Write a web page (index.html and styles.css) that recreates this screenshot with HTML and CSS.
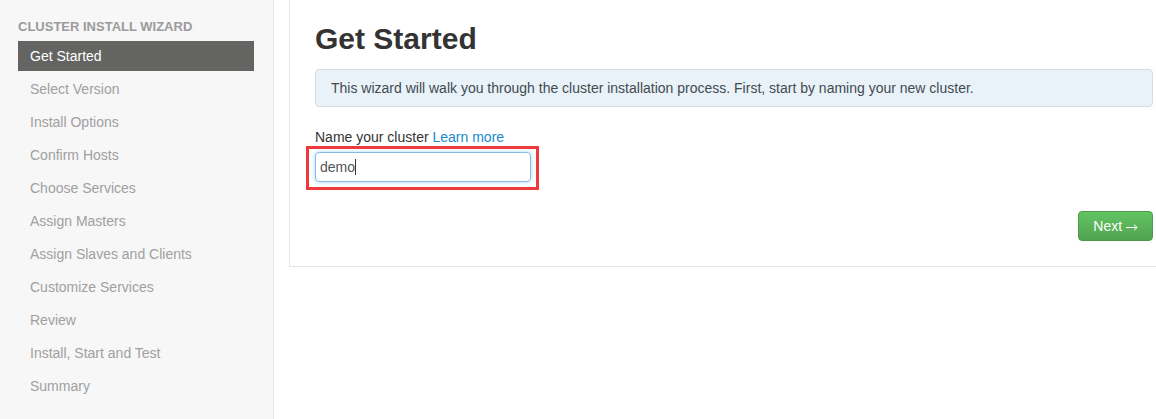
FILE: index.html
```html
<!DOCTYPE html>
<html>
<head>
<meta charset="utf-8">
<link rel="stylesheet" href="styles.css">
</head>
<body>
<div class="layout">
  <aside class="sidebar">
    <div class="nav-header">CLUSTER INSTALL WIZARD</div>
    <ul class="nav-list">
      <li class="nav-item active">Get Started</li>
      <li class="nav-item">Select Version</li>
      <li class="nav-item">Install Options</li>
      <li class="nav-item">Confirm Hosts</li>
      <li class="nav-item">Choose Services</li>
      <li class="nav-item">Assign Masters</li>
      <li class="nav-item">Assign Slaves and Clients</li>
      <li class="nav-item">Customize Services</li>
      <li class="nav-item">Review</li>
      <li class="nav-item">Install, Start and Test</li>
      <li class="nav-item">Summary</li>
    </ul>
  </aside>
  <main class="main">
    <section class="card">
      <h1 class="title">Get Started</h1>
      <div class="alert">This wizard will walk you through the cluster installation process. First, start by naming your new cluster.</div>
      <label class="field-label">Name your cluster <a class="link">Learn more</a></label>
      <div class="input-wrap">
        <div class="input"><span>demo</span><span class="caret"></span></div>
        <span class="highlight"></span>
      </div>
      <div class="actions">
        <button class="btn-next">Next <svg class="arrow" width="12" height="7" viewBox="0 0 12 7"><path d="M0 3.5H11M8 0.8L11.2 3.5L8 6.2" fill="none" stroke="#fff" stroke-width="1"/></svg></button>
      </div>
    </section>
  </main>
</div>
</body>
</html>
```
FILE: styles.css
```css
html, body {
  margin: 0;
  padding: 0;
  height: 100%;
  overflow: hidden;
  background: #fff;
  font-family: "Liberation Sans", Arial, sans-serif;
  font-size: 14px;
  color: #333;
}
.layout {
  display: flex;
  height: 419px;
}
.sidebar {
  width: 255px;
  flex: 0 0 255px;
  background: #f7f7f7;
  border-right: 1px solid #e6e6e6;
  padding: 17px 0 0 18px;
}
.nav-header {
  font-size: 13px;
  font-weight: bold;
  line-height: 20px;
  color: #9b9b9b;
  margin-bottom: 4px;
}
.nav-list {
  list-style: none;
  margin: 0;
  padding: 0;
  width: 236px;
}
.nav-item {
  line-height: 20px;
  padding: 5px 12px;
  margin-bottom: 3px;
  color: #a0a0a0;
}
.nav-item.active {
  background: #646562;
  color: #fff;
}
.main {
  flex: 1;
  padding-left: 15px;
  min-width: 0;
}
.card {
  width: 838px;
  border: 1px solid #e6e6e6;
  border-top: none;
  padding: 21px 25px 25px 25px;
}
.title {
  margin: 0;
  font-size: 30px;
  line-height: 36px;
  font-weight: bold;
  color: #333;
}
.alert {
  margin-top: 12px;
  background: #e8f2f8;
  border: 1px solid #d5dde2;
  border-radius: 4px;
  padding: 8px 15px;
  line-height: 20px;
  color: #434a51;
}
.field-label {
  display: block;
  margin-top: 20px;
  line-height: 20px;
  color: #333;
}
.link {
  color: #1a8acb;
}
.input-wrap {
  position: relative;
  margin-top: 5px;
  width: 216px;
  height: 30px;
}
.input {
  box-sizing: border-box;
  width: 216px;
  height: 30px;
  border: 1px solid #85b9e6;
  border-radius: 4px;
  box-shadow: 0 0 5px rgba(82, 168, 236, 0.45);
  padding: 0 4px;
  display: flex;
  align-items: center;
  color: #555;
  line-height: 20px;
}
.caret {
  display: inline-block;
  width: 1px;
  height: 16px;
  background: #333;
}
.highlight {
  position: absolute;
  left: -9px;
  top: -6px;
  width: 227px;
  height: 38px;
  border: 3px solid #ee3a3a;
}
.actions {
  display: flex;
  justify-content: flex-end;
  margin-top: 29px;
}
.btn-next {
  font-family: "Liberation Sans", Arial, sans-serif;
  font-size: 14px;
  line-height: 20px;
  height: 30px;
  padding: 4px 14px 4px 14px;
  color: #fff;
  background: linear-gradient(#62c462, #51a351);
  border: 1px solid #4c9a4c;
  border-radius: 4px;
  cursor: pointer;
}
.arrow {
  vertical-align: middle;
  margin-left: 0;
}
```
